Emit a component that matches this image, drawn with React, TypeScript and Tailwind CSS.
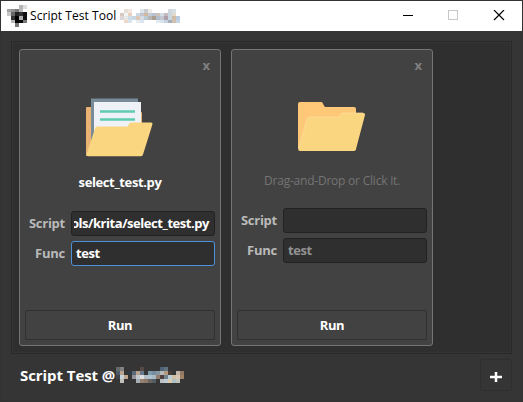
import React from 'react';

type Cell = string | null;

function Mosaic({ rows, className }: { rows: Cell[][]; className: string }) {
  return (
    <svg className={className} viewBox={`0 0 ${rows[0].length} ${rows.length}`} preserveAspectRatio="none" shapeRendering="crispEdges">
      {rows.map((row, y) => row.map((fill, x) => fill && <rect key={`${x}-${y}`} x={x} y={y} width="1" height="1" fill={fill} />))}
    </svg>
  );
}

const _ = null;
const appMark: Cell[][] = [
  [_, _, _, '#b5b5b5', '#dedede'],
  ['#a3a3a3', '#929292', '#777777', '#b9b9b9', _],
  ['#c7c7c7', '#666666', '#222222', '#333333', '#101010'],
  [_, '#333333', '#000000', '#b0b0b0', '#111111'],
  [_, '#b8b8b8', '#000000', '#080808', '#777777'],
  [_, _, '#777777', _, _],
];
const titleMark: Cell[][] = [
  [_, '#e8ded7', '#f3e6e0', _, _, '#dde6ed', '#c8ccd2', '#eeeae8', _, _, _, _, '#d2d6e0', '#d6dfe3', _],
  ['#d6c8be', '#f0f5f8', '#ead1bd', _, '#cad9e5', '#c5c6cd', '#d5b79f', '#c1cbd5', '#b7c2d2', '#cdc2bb', '#d4dbe4', '#c6bac0', '#c7d5df', '#e5d9cc', _],
  ['#ddd7d5', '#e9e7e5', '#cfdde9', '#c8d6e1', '#dfc9b6', '#d6dce6', '#b8cbd5', '#b9b3b1', '#aa9e91', '#b5bcc9', '#c4c7d1', '#ad9eaa', '#c8d6df', '#cfbba6', '#b9cce1'],
  [_, '#edd9ca', '#d5e4ef', _, '#e7edf1', '#dce5ed', _, _, _, '#e2eaf1', '#d8e3ed', '#c4d3df', '#a5adb7', '#d2c0b0', '#c6d6e5'],
];
const footerMark: Cell[][] = [
  ['#65696b', '#81817f', _, _, _, _, '#554941', _, _, _, _, '#4e6376', '#61727e', _, _, _, _],
  ['#4c596b', '#bda48f', _, '#303844', '#5a6878', '#b7a28f', '#69788a', _, '#7f9caf', '#778d9f', '#8796a1', '#b4b9b9', '#b49a82', '#4b3d36', _, '#c4b7a8', '#967965'],
  ['#3b424e', '#c6d5dc', '#c1a990', _, '#92949a', '#c4c8cf', '#dce0e2', '#b3bdc5', '#adc3cf', '#a9bbc5', '#937c70', '#543e3d', '#708393', '#b9ced7', '#d0bda2', '#d6c5b2', '#a18166'],
  [_, '#c2c0ba', _, _, _, '#a6adb3', '#95806f', '#8c7968', '#656462', '#555d64', _, '#bac2c6', '#c0ccd3', '#ddccab', '#adbfc5', '#c2c3bb', _],
];

function Folder({ loaded = false }: { loaded?: boolean }) {
  return loaded ? (
    <svg className="h-[60px] w-[68px]" viewBox="0 0 68 60">
      <path d="M1 9h10v5h44q1 0 1 1v43H1a1 1 0 0 1-1-1V10q0-1 1-1Z" fill="#eab373" />
      <path d="M5 .5h47v50H5Z" fill="#778c98" />
      <path d="M8 4h47v49H8Z" fill="#eef2f6" />
      <path d="M14 13.5h35M14 21.5h35" fill="none" stroke="#60cab0" strokeWidth="2.6" />
      <path d="M11 28.5H41q1 0 1.7-2t2.3-2h20q2 0 1.4 2L57 56.5q-.5 1.8-2 1.8H2q-2 0-1.4-2L9 30.5q.5-2 2-2Z" fill="#fbd681" />
    </svg>
  ) : (
    <svg className="h-[50px] w-[68px]" viewBox="0 0 68 50">
      <path d="M2 1h21q2 0 2 2l2 3h29q2 0 2 2v41H2q-2 0-2-2V3q0-2 2-2Z" fill="#fec878" />
      <path d="M11 16H41q1 0 1.7-2t2.3-2h20q2.5 0 2 2L58 48q-.4 2-2 2H2q-2 0-1.6-2L9 18q.5-2 2-2Z" fill="#fad681" />
      <path d="m1 47 8-29q.5-2 2-2h30q1 0 1.7-2t2.3-2h20" fill="none" stroke="#ffdf9e" strokeWidth=".7" />
    </svg>
  );
}

function Field({ label, value, focused, muted }: { label: string; value: string; focused?: boolean; muted?: boolean }) {
  const path = value.length > 10;
  return (
    <div className="flex h-[25px] items-center">
      <label className="w-[40px] text-right text-[13px] font-bold tracking-[-0.25px] text-[#bababa]">{label}</label>
      <div className={`ml-[6px] flex h-[25px] w-[144px] items-center rounded-[3px] border bg-[#2f2f2f] px-[2px] ${focused ? 'border-[#4f91d9]' : 'border-[#222222]'}`}>
        <div className={`flex h-[21px] w-full items-center overflow-hidden whitespace-nowrap font-bold ${path ? 'justify-end pr-[3px]' : 'pl-[2px]'} ${muted ? 'text-[#929292]' : 'text-white'}`}>
          <span className="shrink-0 text-[13px] tracking-[-0.45px]">{value}</span>
        </div>
      </div>
    </div>
  );
}

function ScriptCard({ loaded = false }: { loaded?: boolean }) {
  return (
    <section className="flex h-[297px] w-[202px] flex-col rounded-[3px] border border-[#757575] bg-[#424242] px-[5px]">
      <button className="mr-[5px] mt-[6px] mb-px h-[18px] self-end text-[13px] leading-[18px] font-bold text-[#808080]">x</button>
      <div className={`flex h-[60px] justify-center ${loaded ? 'mt-[23px] pr-px' : 'mt-[26px]'}`}><Folder loaded={loaded} /></div>
      <div className={`flex h-[20px] items-center justify-center whitespace-nowrap ${loaded ? 'mt-[15px] text-[13px] font-bold tracking-[-0.38px] text-white' : 'mt-[10px] text-[12px] tracking-[-0.22px] text-[#747474]'}`}>
        {loaded ? 'select_test.py' : 'Drag-and-Drop or Click it.'}
      </div>
      <div className={`flex flex-col gap-[5px] ${loaded ? 'mt-[18px]' : 'mt-[17px]'}`}>
        <Field label="Script" value={loaded ? 'ols/krita/select_test.py' : ''} />
        <Field label="Func" value="test" focused={loaded} muted={!loaded} />
      </div>
      <button className="mt-auto mb-[5px] h-[30px] w-full rounded-[2px] border border-[#303030] pt-[2px] text-[13px] font-bold tracking-[-0.4px] text-white">Run</button>
    </section>
  );
}

export default function App() {
  return (
    <main className="flex h-[402px] w-[523px] flex-col overflow-hidden border border-[#333333] bg-[#353535] [font-family:'Open_Sans','Noto_Sans',sans-serif]">
      <header className="flex h-[30px] shrink-0 items-center bg-white text-black">
        <Mosaic rows={appMark} className="ml-[6px] h-[22px] w-[20px]" />
        <h1 className="ml-[3px] w-[90px] whitespace-nowrap text-[12px] font-normal tracking-[0.05px]">Script Test Tool</h1>
        <Mosaic rows={titleMark} className="h-[14px] w-[60px]" />
        <svg className="ml-auto mr-[15px] h-[12px] w-[104px]" viewBox="0 0 104 12" fill="none" shapeRendering="crispEdges">
          <path d="M0 5.5h10" stroke="#000" />
          <path d="M45.5.5h9v9h-9z" stroke="#c8c8c8" />
          <path d="m91 0 10 10m0-10L91 10" stroke="#000" strokeWidth="1.15" shapeRendering="geometricPrecision" />
        </svg>
      </header>
      <div className="ml-[10px] mt-[10px] flex h-[313px] w-[501px] shrink-0 gap-[10px] border border-[#292929] bg-[#2f2f2f] pl-[7px] pt-[7px] shadow-[inset_0_0_0_1px_#343434]">
        <ScriptCard loaded />
        <ScriptCard />
      </div>
      <footer className="ml-[19px] mr-[10px] mt-[5px] flex h-[32px] shrink-0 items-center">
        <h2 className="w-[96px] whitespace-nowrap text-[15px] font-bold tracking-[-0.07px] text-white">Script Test @</h2>
        <Mosaic rows={footerMark} className="h-[16px] w-[68px]" />
        <button className="ml-auto flex h-[32px] w-[32px] items-center justify-center rounded-[2px] border border-[#2f2f2f] pt-[3px]">
          <svg className="h-[12px] w-[12px]" viewBox="0 0 12 12"><path d="M6 1v10M0 6h12" stroke="white" strokeWidth="2.5" /></svg>
        </button>
      </footer>
    </main>
  );
}
